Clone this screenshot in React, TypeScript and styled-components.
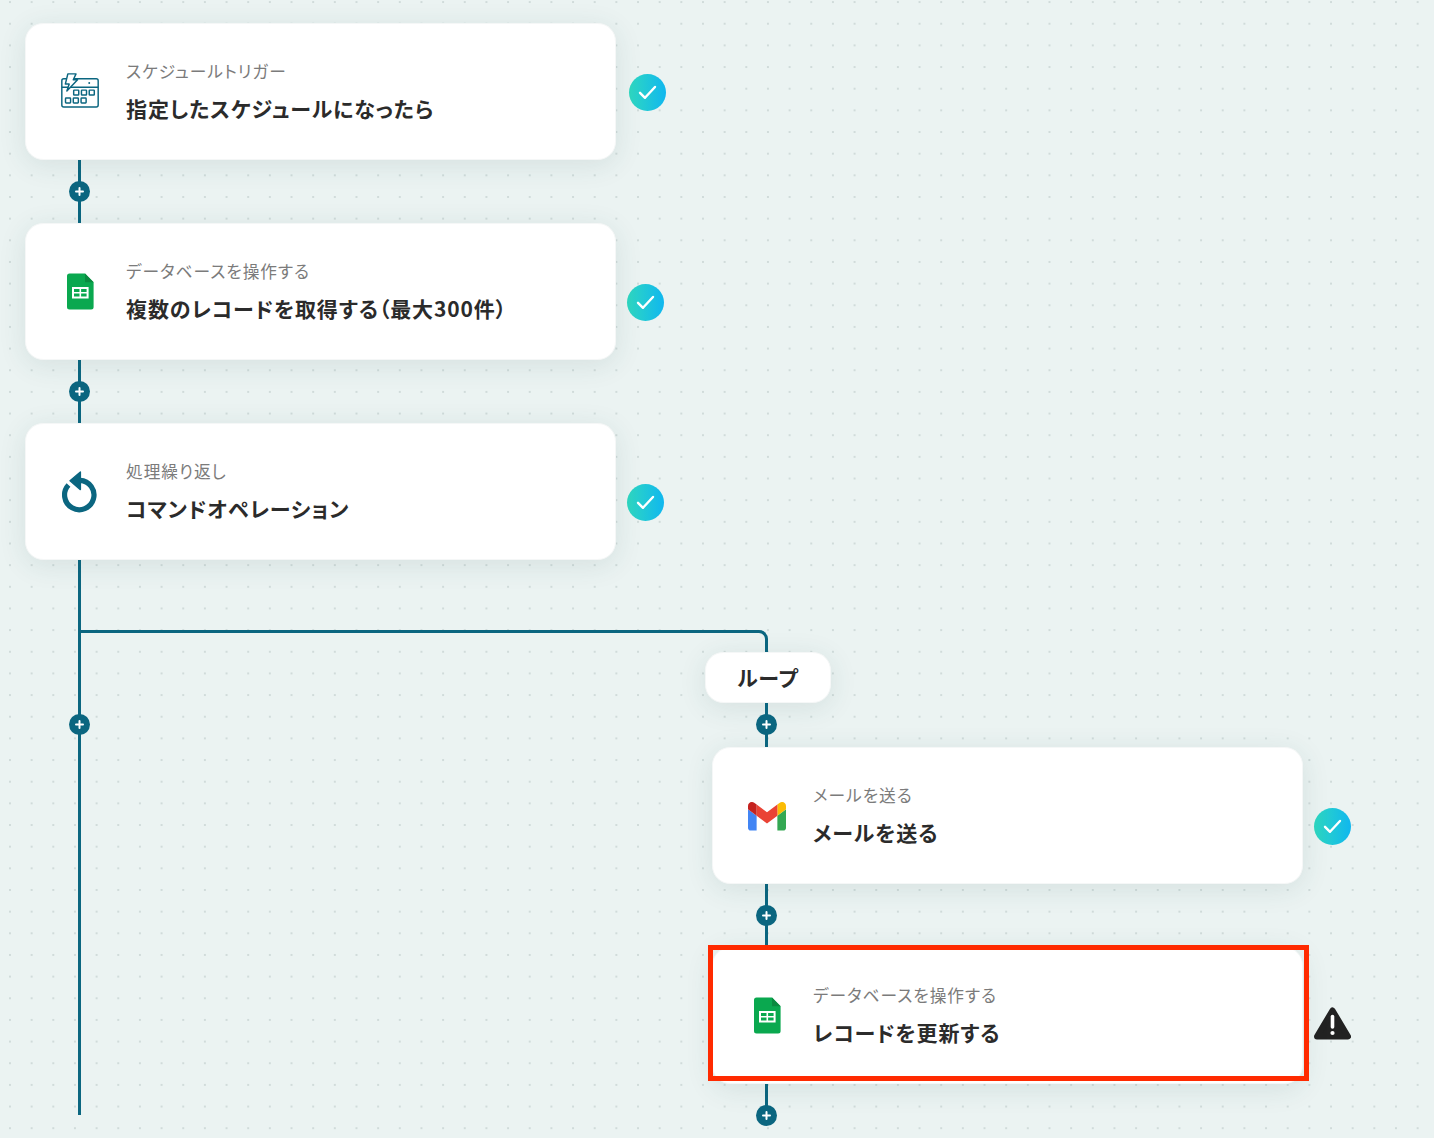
import React from 'react';
import styled, { createGlobalStyle } from 'styled-components';

const TEAL = '#0b6680';

const GlobalStyle = createGlobalStyle`
  html, body {
    margin: 0;
    padding: 0;
  }
  body {
    font-family: "Noto Sans CJK JP", "Noto Sans", sans-serif;
    font-feature-settings: "palt";
  }
`;

const Canvas = styled.div`
  box-sizing: border-box;
  width: 1434px;
  height: 1138px;
  padding: 23px 0 0 25px;
  overflow: hidden;
  background-color: #ebf3f2;
  background-image: radial-gradient(circle, #d0dbda 1.1px, transparent 1.5px);
  background-size: 21.67px 21.67px;
  background-position: -0.85px -8.75px;
`;

const NodeRow = styled.div`
  display: flex;
  align-items: flex-start;
`;

const Card = styled.div<{ $flagged?: boolean }>`
  position: relative;
  box-sizing: border-box;
  display: flex;
  align-items: center;
  flex: none;
  width: 591px;
  height: 137px;
  padding: 0 0 3px 34px;
  background: #fff;
  border: 1px solid #f5f7f7;
  border-radius: 18px;
  box-shadow: 0 5px 28px rgba(40, 80, 85, 0.11);

  ${({ $flagged }) =>
    $flagged &&
    `
    &::after {
      content: '';
      position: absolute;
      top: -3px;
      left: -5px;
      right: -7px;
      bottom: 2px;
      border: 5px solid #ff2a00;
    }
  `}
`;

const IconSlot = styled.div<{ $drop?: number }>`
  display: flex;
  align-items: center;
  justify-content: center;
  flex: none;
  width: 40px;
  margin-top: ${({ $drop }) => $drop ?? 3}px;
  margin-right: 26px;
`;

const TextBlock = styled.div`
  display: flex;
  flex-direction: column;
  gap: 11px;
`;

const Label = styled.div`
  font-size: 16.7px;
  line-height: 24px;
  letter-spacing: 1px;
  color: #7b7b7b;
`;

const Title = styled.div`
  font-size: 21px;
  line-height: 28px;
  font-weight: 700;
  letter-spacing: 0.9px;
  color: #2b2b2b;
`;

const Connector = styled.div<{ $height?: number; $lift?: number }>`
  box-sizing: border-box;
  display: flex;
  align-items: center;
  justify-content: center;
  width: 3px;
  height: ${({ $height }) => $height ?? 63}px;
  margin-left: 53px;
  padding-bottom: ${({ $lift }) => $lift ?? 0}px;
  background: ${TEAL};
`;

const Tail = styled(Connector)`
  align-items: flex-end;
`;

const PlusDot = styled.div<{ $tail?: boolean }>`
  display: flex;
  align-items: center;
  justify-content: center;
  flex: none;
  width: 21px;
  height: 21px;
  margin-bottom: ${({ $tail }) => ($tail ? '-10.5px' : '0')};
  border-radius: 50%;
  background: ${TEAL};
`;

const LowerArea = styled.div`
  display: flex;
  align-items: flex-start;
`;

const Trunk = styled.div`
  box-sizing: border-box;
  display: flex;
  justify-content: center;
  flex: none;
  width: 3px;
  height: 555px;
  margin-left: 53px;
  padding-top: 154px;
  background: ${TEAL};
`;

const Branch = styled.div`
  flex: none;
  margin-top: 70px;
`;

const BranchCurve = styled.div`
  box-sizing: border-box;
  width: 687px;
  height: 22px;
  border-top: 3px solid ${TEAL};
  border-right: 3px solid ${TEAL};
  border-top-right-radius: 9px;
`;

const BranchBody = styled.div`
  margin-left: 631px;
`;

const LoopPill = styled.div`
  box-sizing: border-box;
  display: flex;
  align-items: center;
  justify-content: center;
  width: 126px;
  height: 51px;
  margin-left: -7px;
  padding-bottom: 2px;
  font-size: 21px;
  font-weight: 700;
  letter-spacing: 0.8px;
  color: #2b2b2b;
  background: #fff;
  border: 1px solid #f5f7f7;
  border-radius: 18px;
  box-shadow: 0 5px 28px rgba(40, 80, 85, 0.11);
`;

const Badge = styled.div<{ $top: number; $gap?: number }>`
  display: flex;
  align-items: center;
  justify-content: center;
  flex: none;
  width: 37px;
  height: 37px;
  margin: ${({ $top }) => $top}px 0 0 ${({ $gap }) => $gap ?? 11}px;
  border-radius: 50%;
  background: linear-gradient(90deg, #2fd8c0, #10b7ef);
`;

const WarningMark = styled.div`
  flex: none;
  width: 37px;
  height: 33px;
  margin: 60px 0 0 11px;
`;

const Plus = () => (
  <svg width="9" height="9" viewBox="0 0 9 9">
    <path d="M4.5 1v7M1 4.5h7" stroke="#fff" strokeWidth="2" strokeLinecap="round" />
  </svg>
);

const Check = () => (
  <svg width="19" height="15" viewBox="0 0 19 15" fill="none">
    <path
      d="M2 7.8l5 5L17 2"
      stroke="#fff"
      strokeWidth="2.4"
      strokeLinecap="round"
      strokeLinejoin="round"
    />
  </svg>
);

const ScheduleIcon = () => (
  <svg width="38" height="35" viewBox="0 0 39 36" fill="none" stroke={TEAL} strokeWidth="1.5">
    <rect x="0.8" y="6" width="37.4" height="29" rx="2" />
    <path d="M0.8 14.6h37.4" />
    <path
      d="M7 0.9h8.4L12.6 7H17L6 18.4 8.4 11.4H4.4Z"
      fill="#fff"
      strokeLinejoin="round"
    />
    <circle cx="29" cy="10.2" r="1" fill={TEAL} stroke="none" />
    {[13, 21, 29].map((x) => (
      <rect key={x} x={x} y="17.6" width="5.2" height="5" rx="0.6" />
    ))}
    {[4.6, 12.6, 20.6].map((x) => (
      <rect key={x} x={x} y="25.8" width="5.2" height="5" rx="0.6" />
    ))}
  </svg>
);

const SheetsIcon = () => (
  <svg width="27" height="37" viewBox="0 0 27 37">
    <path
      d="M2.5 0.5H18L26.6 9.2V34a2.5 2.5 0 0 1-2.5 2.5H2.5A2.5 2.5 0 0 1 0 34V3A2.5 2.5 0 0 1 2.5 0.5Z"
      fill="#0aa84f"
    />
    <path d="M18 0.5L26.6 9.2H18Z" fill="#0a8a40" />
    <path
      fillRule="evenodd"
      d="M5 14h16.6v11.6H5ZM7 16v3h5.5v-3ZM14.1 16v3h5.5v-3ZM7 20.6v3h5.5v-3ZM14.1 20.6v3h5.5v-3Z"
      fill="#fff"
    />
  </svg>
);

const RepeatIcon = () => (
  <svg width="40" height="46" viewBox="0 0 40 46" fill="none">
    <path d="M20 10.3A14.7 14.7 0 1 1 8.5 15" stroke={TEAL} strokeWidth="5.2" />
    <path d="M10 10.7L20.4 2V19.6Z" fill={TEAL} stroke={TEAL} strokeWidth="1.4" strokeLinejoin="round" />
  </svg>
);

const GmailIcon = () => (
  <svg width="38" height="28.5" viewBox="52 42 88 66">
    <path fill="#4285f4" d="M58 108h14V74L52 59v43c0 3.32 2.69 6 6 6" />
    <path fill="#34a853" d="M120 108h14c3.32 0 6-2.69 6-6V59l-20 15" />
    <path fill="#fbbc04" d="M120 48v26l20-15v-8c0-7.42-8.47-11.65-14.4-7.2" />
    <path fill="#ea4335" d="M72 74V48l24 18 24-18v26L96 92" />
    <path fill="#c5221f" d="M52 51v8l20 15V48l-5.6-4.2c-5.94-4.45-14.4-.22-14.4 7.2" />
  </svg>
);

const WarningIcon = () => (
  <svg width="37" height="33" viewBox="0 0 37 33">
    <path
      d="M18.5 3.5L34 29.5H3Z"
      fill="#222"
      stroke="#222"
      strokeWidth="6"
      strokeLinejoin="round"
    />
    <path d="M18.5 9.5V20" stroke="#fff" strokeWidth="3.6" strokeLinecap="round" />
    <circle cx="18.5" cy="26" r="2.1" fill="#fff" />
  </svg>
);

interface NodeProps {
  icon: React.ReactNode;
  iconDrop?: number;
  label: string;
  title: string;
  flagged?: boolean;
  children: React.ReactNode;
}

const Node = ({ icon, iconDrop, label, title, flagged, children }: NodeProps) => (
  <NodeRow>
    <Card $flagged={flagged}>
      <IconSlot $drop={iconDrop}>{icon}</IconSlot>
      <TextBlock>
        <Label>{label}</Label>
        <Title>{title}</Title>
      </TextBlock>
    </Card>
    {children}
  </NodeRow>
);

const Link = ({ height, lift }: { height?: number; lift?: number }) => (
  <Connector $height={height} $lift={lift}>
    <PlusDot>
      <Plus />
    </PlusDot>
  </Connector>
);

export default function App() {
  return (
    <>
      <GlobalStyle />
      <Canvas>
        <Node icon={<ScheduleIcon />} iconDrop={1} label="スケジュールトリガー" title="指定したスケジュールになったら">
          <Badge $top={51} $gap={13}>
            <Check />
          </Badge>
        </Node>
        <Link />
        <Node icon={<SheetsIcon />} label="データベースを操作する" title="複数のレコードを取得する（最大300件）">
          <Badge $top={61}>
            <Check />
          </Badge>
        </Node>
        <Link />
        <Node icon={<RepeatIcon />} iconDrop={5} label="処理繰り返し" title="コマンドオペレーション">
          <Badge $top={61}>
            <Check />
          </Badge>
        </Node>
        <LowerArea>
          <Trunk>
            <PlusDot>
              <Plus />
            </PlusDot>
          </Trunk>
          <Branch>
            <BranchCurve />
            <BranchBody>
              <LoopPill>ループ</LoopPill>
              <Link height={44} lift={2} />
              <Node icon={<GmailIcon />} iconDrop={5} label="メールを送る" title="メールを送る">
                <Badge $top={61}>
                  <Check />
                </Badge>
              </Node>
              <Link />
              <Node icon={<SheetsIcon />} label="データベースを操作する" title="レコードを更新する" flagged>
                <WarningMark>
                  <WarningIcon />
                </WarningMark>
              </Node>
              <Tail $height={31}>
                <PlusDot $tail>
                  <Plus />
                </PlusDot>
              </Tail>
            </BranchBody>
          </Branch>
        </LowerArea>
      </Canvas>
    </>
  );
}
